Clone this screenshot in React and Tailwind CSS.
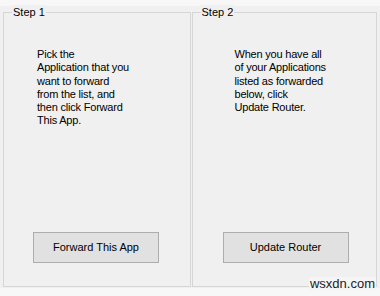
export default function App() {
  const font = { fontFamily: '"Liberation Sans", Arial, sans-serif' };
  return (
    <div style={font} className="relative w-[380px] h-[296px] bg-[#f0f0f0] flex flex-col text-[11px] text-black overflow-hidden">
      <div className="h-[6px] bg-[#f7f7f7]" />
      <div className="flex-1 flex gap-[1px] pl-[3px] pr-[3px] pt-[6px]">
        {/* Step 1 */}
        <div className="relative w-[188px] h-[275px] border border-[#d6d6d6] flex flex-col">
          <span className="absolute -top-[8px] left-[8px] px-[1px] bg-[#f0f0f0] leading-[14px]">Step 1</span>
          <p className="ml-[33px] mt-[35px] leading-[13.3px] tracking-[-0.2px]">
            Pick the<br />Application that you<br />want to forward<br />from the list, and<br />then click Forward<br />This App.
          </p>
          <button className="mt-auto mb-[23px] ml-[29px] w-[126px] h-[31px] bg-[#e1e1e1] border border-[#adadad] text-[11px]">
            Forward This App
          </button>
        </div>
        {/* Step 2 */}
        <div className="relative w-[186px] h-[275px] border border-[#d6d6d6] flex flex-col">
          <span className="absolute -top-[8px] left-[8px] px-[1px] bg-[#f0f0f0] leading-[14px]">Step 2</span>
          <p className="ml-[42px] mt-[35px] leading-[13.3px] tracking-[-0.2px]">
            When you have all<br />of your Applications<br />listed as forwarded<br />below, click<br />Update Router.
          </p>
          <button className="mt-auto mb-[23px] ml-[30px] w-[126px] h-[31px] bg-[#e1e1e1] border border-[#adadad] text-[11px]">
            Update Router
          </button>
        </div>
      </div>
      <div className="h-[8px] bg-[#f7f7f7]" />
      <span className="absolute right-[4px] bottom-[5px] text-[13px] leading-[14px] text-[#222] bg-[#f5f5f5] px-[1px]">wsxdn.com</span>
    </div>
  );
}
